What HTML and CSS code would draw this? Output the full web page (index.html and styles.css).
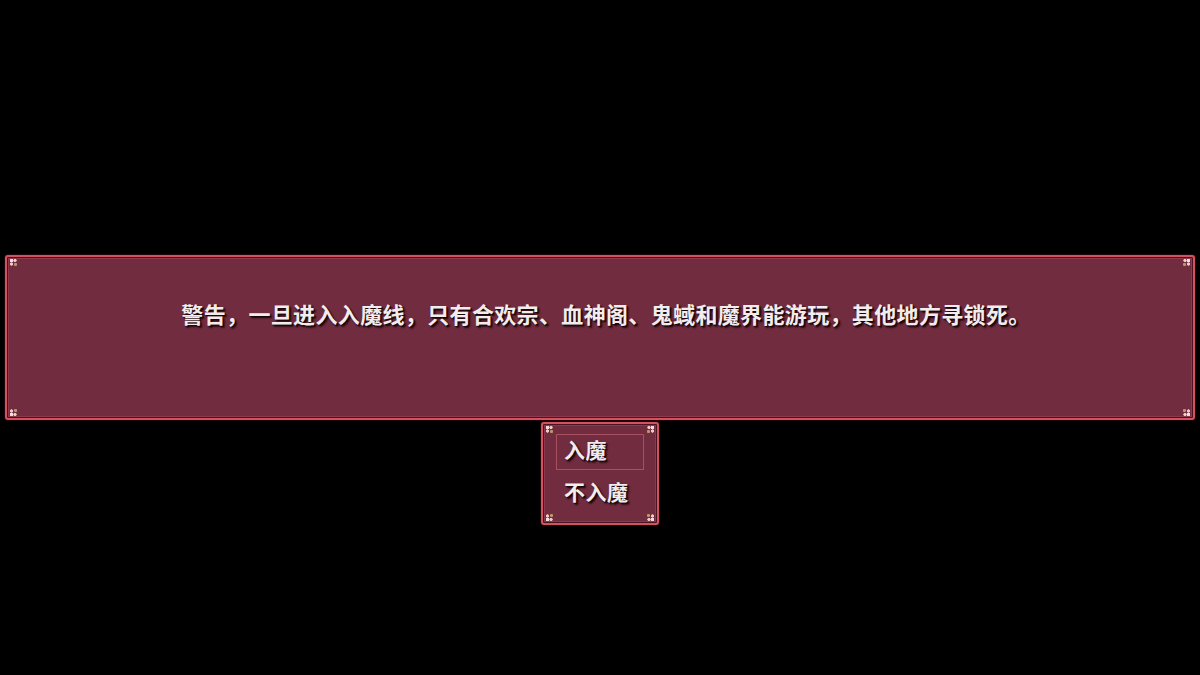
FILE: index.html
```html
<!DOCTYPE html>
<html lang="zh-CN">
<head>
<meta charset="utf-8">
<link rel="stylesheet" href="styles.css">
</head>
<body>
<div class="screen">
  <div class="window message">
    <span class="corner tl"></span><span class="corner tr"></span>
    <span class="corner bl"></span><span class="corner br"></span>
    <p class="msg-text">警告，一旦进入入魔线，只有合欢宗、血神阁、鬼蜮和魔界能游玩，其他地方寻锁死。</p>
  </div>
  <div class="window choices">
    <span class="corner tl"></span><span class="corner tr"></span>
    <span class="corner bl"></span><span class="corner br"></span>
    <div class="choice selected">入魔</div>
    <div class="choice">不入魔</div>
  </div>
</div>
</body>
</html>
```
FILE: styles.css
```css
html, body {
  margin: 0;
  padding: 0;
  background: #000;
  width: 1200px;
  height: 675px;
  overflow: hidden;
}
.screen {
  display: flex;
  flex-direction: column;
  align-items: center;
  padding-top: 255px;
  gap: 2px;
}
.window {
  position: relative;
  box-sizing: border-box;
  background: #722c40;
  border: 2px solid #d2525f;
  border-radius: 3px;
  box-shadow: inset 0 0 0 1px #4a1422, inset 0 0 0 2px #8a3a4c, 0 0 2px #6a1a22;
}
.message {
  width: 1190px;
  height: 165px;
  display: flex;
  align-items: center;
  justify-content: center;
}
.msg-text {
  margin: 0 0 50px 12px;
  font-family: "Noto Sans CJK SC", sans-serif;
  font-weight: 700;
  font-size: 22px;
  letter-spacing: 0.35px;
  color: #f2ecee;
  text-shadow: 1px 1px 1px #1a0608, 2px 2px 2px #1a0608;
}
.choices {
  width: 118px;
  height: 103px;
  padding: 10px 13px 0 13px;
  display: flex;
  flex-direction: column;
  gap: 6px;
}
.choice {
  box-sizing: border-box;
  height: 36px;
  padding: 0 0 6px 7px;
  display: flex;
  align-items: center;
  font-family: "Noto Sans CJK SC", sans-serif;
  font-weight: 700;
  font-size: 21px;
  letter-spacing: 0.5px;
  color: #f2ecee;
  text-shadow: 1px 1px 1px #1a0608, 2px 2px 2px #1a0608;
  border: 1px solid transparent;
}
.choice.selected {
  border-color: #a8505e;
}
.corner {
  position: absolute;
  width: 9px;
  height: 9px;
  background:
    radial-gradient(circle at 2.5px 2.5px, #f6dde0 1.5px, transparent 2px),
    radial-gradient(circle at 6px 2.5px, #f0c8cc 1.4px, transparent 1.9px),
    radial-gradient(circle at 2.5px 6px, #f0c8cc 1.4px, transparent 1.9px),
    radial-gradient(circle at 6.5px 6.5px, #b89a60 1.3px, transparent 1.8px);
}
.corner.tl { top: 1px; left: 2px; }
.corner.tr { top: 1px; right: 2px; transform: scaleX(-1); }
.corner.bl { bottom: 1px; left: 2px; transform: scaleY(-1); }
.corner.br { bottom: 1px; right: 2px; transform: scale(-1, -1); }
```
